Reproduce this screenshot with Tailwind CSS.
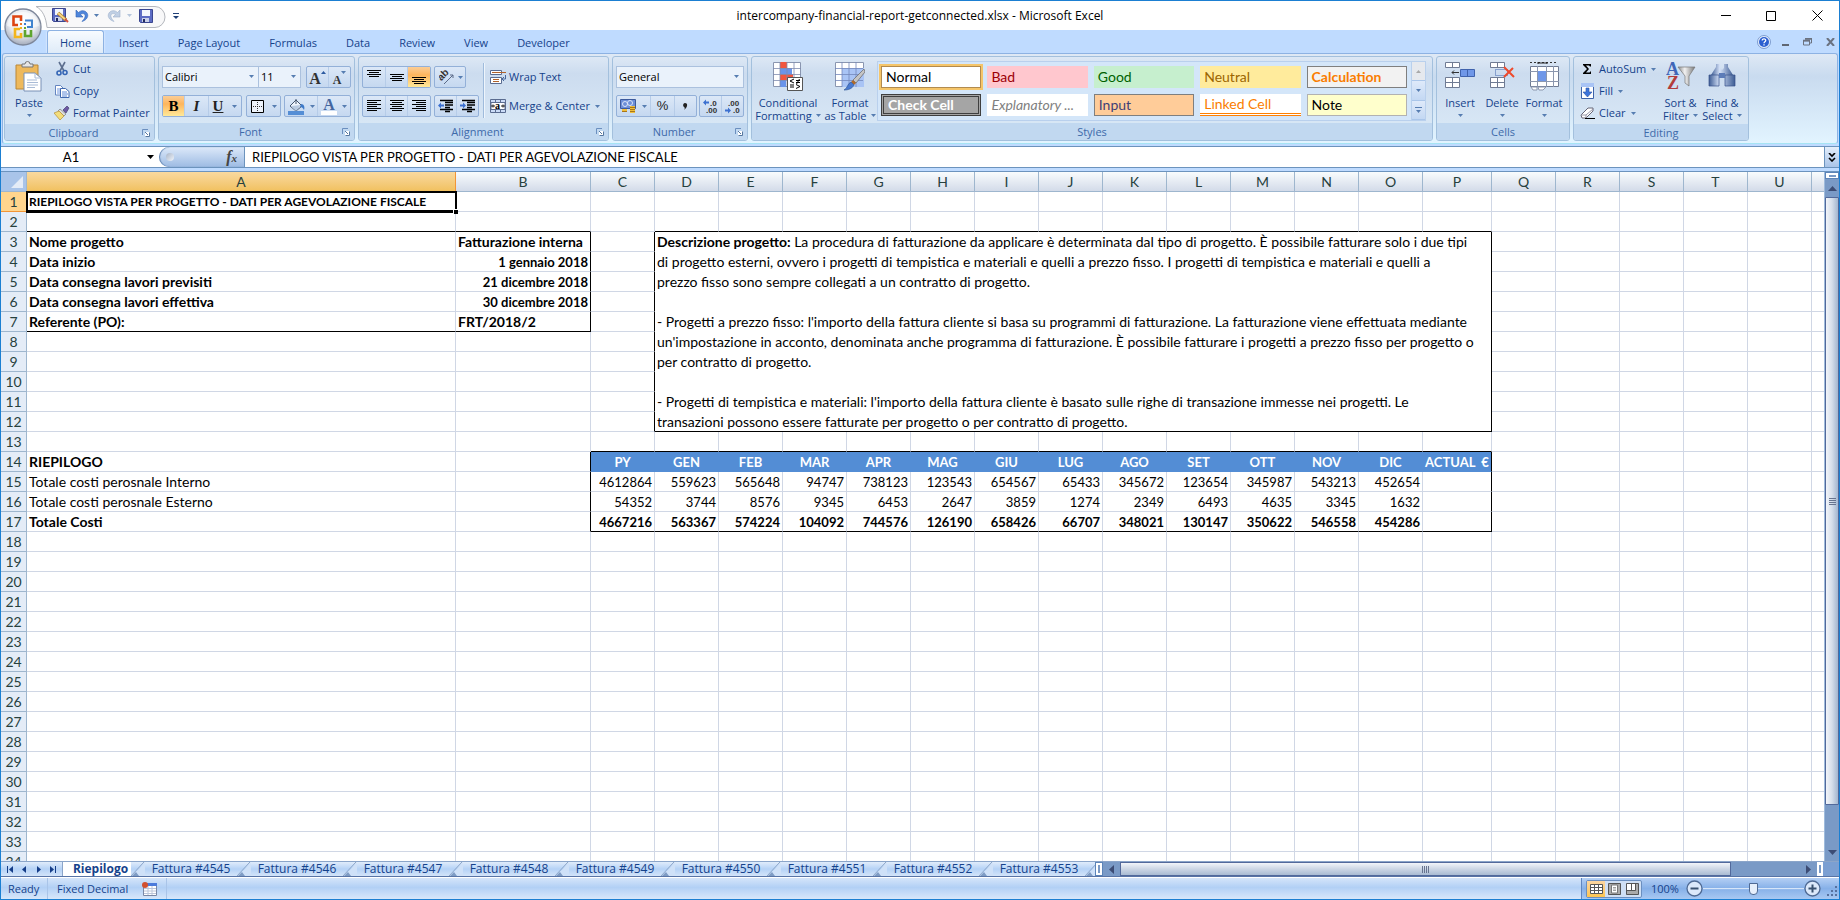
<!DOCTYPE html>
<html lang="it">
<head>
    <meta charset="UTF-8">
    <meta name="viewport" content="width=device-width, initial-scale=1.0">
    <title>intercompany-financial-report-getconnected.xlsx - Microsoft Excel</title>
    <script src="https://cdn.jsdelivr.net/npm/@tailwindcss/browser@4"></script>
</head>
<body class="h-screen overflow-hidden flex flex-col border border-[#1b7fd2] bg-[#bfdbff] font-['Open_Sans',sans-serif] text-[11px] leading-[16px] text-[#15428b]">

    <!-- Shared icon shapes -->
    <svg class="absolute size-0" aria-hidden="true">
        <defs>
            <linearGradient id="g-steel" x1="0" y1="0" x2="1" y2="0"><stop offset="0" stop-color="#3d5c94"/><stop offset=".4" stop-color="#d5e2f8"/><stop offset="1" stop-color="#3d5c94"/></linearGradient>
            <linearGradient id="g-grey" x1="0" y1="0" x2="1" y2="0"><stop offset="0" stop-color="#8a8a8a"/><stop offset=".4" stop-color="#f2f2f2"/><stop offset="1" stop-color="#777"/></linearGradient>
            <radialGradient id="g-orb" cx=".5" cy=".35" r=".65"><stop offset="0" stop-color="#fff"/><stop offset=".6" stop-color="#e6e9ef"/><stop offset="1" stop-color="#a3abbb"/></radialGradient>
            <symbol id="caret" viewBox="0 0 5 3"><path d="M0 0H5L2.500 3Z" fill="#567db1"/></symbol>
            <symbol id="launcher" viewBox="0 0 8 8"><path d="M.5 6V.5H6" fill="none" stroke="#6b8fbf"/><path d="M3 3h4.500v4.500H3z" fill="#fff"/><path d="M3 3L6 6M7.500 3.500v4h-4" fill="none" stroke="#55779f"/></symbol>
            <symbol id="floppy" viewBox="0 0 14 14"><path d="M.5.5h13v13H1.500l-1-1z" fill="#5d6cc4" stroke="#3a4690"/><path d="M3 1h8v6H3z" fill="#f3f6fd"/><path d="M3 9h7v4H3z" fill="#c9d0ea"/><path d="M4 10h2v3H4z" fill="#222b60"/></symbol>
        </defs>
    </svg>

    <!-- Title bar -->
    <header class="relative flex h-[29px] shrink-0 items-center bg-white text-black">
        <svg class="absolute left-[34px] top-[5px]" width="132" height="22" viewBox="0 0 132 22"><path d="M1 .5H120a10 10.500 0 0 1 0 21H12C11 12 8 4 1 .5Z" fill="#f8f8f9" stroke="#b4b7bd"/></svg>
        <div class="relative flex flex-1 items-center">
            <button class="ml-[51px]" aria-label="Save as"><svg width="17" height="15" viewBox="0 0 17 15"><use href="#floppy" width="14" height="14"/><path d="M6 5l8 7" stroke="#a7792a" stroke-width="3.500"/><path d="M6 5l8 7" stroke="#f7d683" stroke-width="2"/><path d="M13 11l3 3" stroke="#d05040" stroke-width="2"/></svg></button>
            <button class="ml-[6px]" aria-label="Undo"><svg width="14" height="14" viewBox="0 0 14 14"><path d="M1 1v7h7L5.500 5.500C8 3.500 11 5 10 8 9.500 10 8 11 7 12.500 12 11 14 7 12 4 10 1 6 1 3.500 3.500Z" fill="#4f86db" stroke="#2f62b5" stroke-width=".6"/></svg></button>
            <button class="ml-[5px]" aria-label="Undo list"><svg width="5" height="3"><use href="#caret"/></svg></button>
            <button class="ml-[8px]" aria-label="Redo"><svg width="14" height="14" viewBox="0 0 14 14"><path d="M13 1v7H6l2.500-2.500C6 3.500 3 5 4 8 4.500 10 6 11 7 12.500 2 11 0 7 2 4 4 1 8 1 10.500 3.500Z" fill="#c0cfe4" stroke="#9db0cb" stroke-width=".6"/></svg></button>
            <button class="ml-[6px] opacity-40" aria-label="Redo list"><svg width="5" height="3"><use href="#caret"/></svg></button>
            <button class="ml-[7px]" aria-label="Save"><svg width="14" height="14"><use href="#floppy"/></svg></button>
            <button class="ml-[20px]" aria-label="Customize Quick Access Toolbar"><svg width="6" height="6" viewBox="0 0 6 6"><path d="M0 .5h6" stroke="#1e3f76"/><path d="M0 3h6L3 6Z" fill="#1e3f76"/></svg></button>
        </div>
        <h1 class="text-[12px]">intercompany-financial-report-getconnected.xlsx - Microsoft Excel</h1>
        <div class="flex flex-1 items-center justify-end">
            <button aria-label="Minimize"><svg width="11" height="11" viewBox="0 0 11 11"><path d="M0 5.500h10" stroke="#000"/></svg></button>
            <button class="ml-[34px]" aria-label="Maximize"><svg width="10" height="10" viewBox="0 0 10 10"><path d="M.5.5h9v9h-9z" fill="none" stroke="#000"/></svg></button>
            <button class="ml-[36px] mr-[16px]" aria-label="Close"><svg width="11" height="11" viewBox="0 0 11 11"><path d="M.5.5l10 10M10.500.5l-10 10" stroke="#000"/></svg></button>
        </div>
        <button class="absolute left-[3px] top-[7px] z-10" aria-label="Office Button">
            <svg width="38" height="38" viewBox="0 0 38 38">
                <circle cx="19" cy="19" r="18" fill="url(#g-orb)" stroke="#7e879a" stroke-width="1.300"/>
                <path d="M3 18a16 14 0 0 1 32 0Q19 23 3 18Z" fill="#fff" opacity=".5"/>
                <g fill="none" stroke-width="2.600">
                    <path d="M17 13V8.500H9.500V17H14" stroke="#dd4412"/>
                    <path d="M21 12.500h7V19h-5" stroke="#4184cf" stroke-width="2"/>
                    <path d="M16 21h-5v8h6v-4" stroke="#f3b51c"/>
                    <path d="M27 22v6h-6v-6" stroke="#5fa52e"/>
                </g>
                <g fill="#e8792a"><path d="M16 15h2v2h-2z"/><path d="M20 15h2v2h-2z" fill="#3c7fd0"/><path d="M16 19h2v2h-2z" fill="#f3b51c"/><path d="M20 19h2v2h-2z" fill="#68ab30"/></g>
            </svg>
        </button>
    </header>

    <!-- Ribbon tabs -->
    <nav class="flex h-[23px] shrink-0 items-stretch gap-px pl-[46px]">
        <button class="rounded-t-[3px] border border-b-0 border-[#8db2e3] bg-linear-to-b from-[#f7fbff] to-[#dfebf8] px-[12px] pt-[2px] shadow-[0_0_2px_#fff]">Home</button>
        <button class="px-[14px] pt-[3px]">Insert</button>
        <button class="px-[14px] pt-[3px]">Page Layout</button>
        <button class="px-[14px] pt-[3px]">Formulas</button>
        <button class="px-[14px] pt-[3px]">Data</button>
        <button class="px-[14px] pt-[3px]">Review</button>
        <button class="px-[14px] pt-[3px]">View</button>
        <button class="px-[14px] pt-[3px]">Developer</button>
        <div class="ml-auto flex items-center pr-[4px]">
            <button aria-label="Help"><svg width="14" height="14" viewBox="0 0 14 14"><circle cx="7" cy="7" r="6.500" fill="#e4eefc" stroke="#7d9cd0"/><circle cx="7" cy="7" r="5" fill="#2c5fd0"/><path d="M5.200 5.500C5.200 3.200 9 3.500 8.700 5.600 8.500 6.700 7 6.800 7 8.200M7 9.200v1.300" fill="none" stroke="#fff" stroke-width="1.300"/></svg></button>
            <button class="ml-[11px]" aria-label="Minimize workbook"><svg width="7" height="10" viewBox="0 0 7 10"><path d="M0 8h7" stroke="#5f6672" stroke-width="2"/></svg></button>
            <button class="ml-[14px]" aria-label="Restore workbook"><svg width="9" height="8" viewBox="0 0 9 8"><path d="M2 1h6.500v4H7M.5 3h6v4h-6z" fill="none" stroke="#6b7280"/><path d="M0 2.500h7M2 .8h7" stroke="#6b7280" stroke-width="1.500"/></svg></button>
            <button class="ml-[14px]" aria-label="Close workbook"><svg width="9" height="8" viewBox="0 0 9 8"><path d="M1 0l7 8M8 0L1 8" stroke="#6b7280" stroke-width="2"/></svg></button>
        </div>
    </nav>

    <!-- Ribbon -->
    <section class="mx-px flex h-[91px] shrink-0 gap-[3px] rounded-[3px] border border-[#8db2e3] border-b-[#a5e4f4] bg-linear-to-b from-[#dfe9f5] via-[#c9dbef] via-25% to-[#e2f4ff] px-px py-[2px] *:flex *:flex-col *:shrink-0 *:overflow-hidden *:rounded-[3px] *:border *:border-[#a3c0dd] *:bg-linear-to-b *:from-[#dde8f5] *:via-[#ccdcef] *:via-20% *:to-[#dbeaf7]">

        <div class="w-[151px]">
            <div class="flex h-[69px]">
                <button class="flex w-[48px] flex-col items-center pt-[4px]">
                    <svg width="28" height="32" viewBox="0 0 28 32">
                        <path d="M1 4h22v24H1z" fill="#eeb95c" stroke="#b98738"/><path d="M7 5V3h3a2 2 0 0 1 5 0h3v3H7z" fill="#e6e6e6" stroke="#777"/>
                        <path d="M9 12h11l6 5v13H9z" fill="#fff" stroke="#7890b5"/><path d="M20 12v5h6M12 19h10M12 21.500h11M12 24h11M12 26.500h8" fill="none" stroke="#a9bbd6"/>
                    </svg>
                    <span class="mt-[2px]">Paste</span>
                    <svg class="mt-[3px]" width="5" height="3"><use href="#caret"/></svg>
                </button>
                <div class="flex flex-col items-start pl-[1px] pt-px">
                    <button class="flex h-[22px] items-center gap-[3px]">
                        <svg width="16" height="16" viewBox="0 0 16 16"><path d="M5 1l5 9M11 1L6 10" stroke="#5d6f8f" stroke-width="1.600"/><circle cx="5" cy="12" r="2" fill="none" stroke="#3465b5" stroke-width="1.600"/><circle cx="11" cy="11.500" r="2" fill="none" stroke="#3465b5" stroke-width="1.600"/></svg>Cut
                    </button>
                    <button class="flex h-[22px] items-center gap-[3px]">
                        <svg width="16" height="16" viewBox="0 0 16 16"><path d="M1.500 2.500h5l2.500 2.500v7h-7.500z" fill="#fff" stroke="#6485c0"/><path d="M3 6h4M3 8h4M3 10h4" stroke="#6e96df"/><path d="M6.500 5.500h5l3.500 3v6h-8.500z" fill="#fff" stroke="#4069b0"/><path d="M8 9h5M8 11h6M8 13h5" stroke="#5c88d8"/></svg>Copy
                    </button>
                    <button class="flex h-[22px] items-center gap-[3px] whitespace-nowrap">
                        <svg width="16" height="16" viewBox="0 0 16 16"><path d="M9 5l4-4 2 2-3 5z" fill="#6d5aa5" stroke="#4b4170" stroke-width=".7"/><path d="M6 4l6 5-2 2-6-5z" fill="#ddd" stroke="#777" stroke-width=".7"/><path d="M5 6l5 5-4 4-6-7z" fill="#f3dd7b" stroke="#b58e35" stroke-width=".7"/></svg>Format Painter
                    </button>
                </div>
            </div>
            <div class="flex flex-1 items-center bg-[#c1d8f0] pr-[4px] text-[#3e6aaa]"><h2 class="flex-1 pt-px text-center">Clipboard</h2><button aria-label="Clipboard pane"><svg width="8" height="8"><use href="#launcher"/></svg></button></div>
        </div>

        <div class="w-[197px]">
            <div class="flex h-[69px] flex-col gap-[7px] px-[3px] pt-[9px]">
                <div class="flex h-[22px]">
                    <div class="relative w-[97px]">
                        <select aria-label="Font" class="size-full appearance-none border border-[#abc1de] bg-[#eaf2fb] pl-[2px] text-black"><option>Calibri</option></select>
                        <svg class="pointer-events-none absolute right-[5px] top-[9px]" width="5" height="3"><use href="#caret"/></svg>
                    </div>
                    <div class="relative -ml-px w-[43px]">
                        <select aria-label="Font size" class="size-full appearance-none border border-[#abc1de] bg-[#eaf2fb] pl-[2px] text-black"><option>11</option></select>
                        <svg class="pointer-events-none absolute right-[5px] top-[9px]" width="5" height="3"><use href="#caret"/></svg>
                    </div>
                    <div class="ml-auto flex w-[45px] divide-x divide-[#b6cce8] rounded-[2px] border border-[#93b0d8] bg-linear-to-b from-[#dce8f7] to-[#c5d8f0] font-['Liberation_Serif',serif] font-bold text-[#333] *:flex *:flex-1 *:items-center *:justify-center">
                        <button aria-label="Increase font size"><span class="pt-[3px] text-[16px]">A</span><svg class="mb-[10px]" width="5" height="3" viewBox="0 0 5 3"><path d="M0 3h5L2.500 0z" fill="#2c5aa0"/></svg></button>
                        <button aria-label="Decrease font size"><span class="pt-[5px] text-[12px]">A</span><svg class="mb-[10px]" width="5" height="3"><use href="#caret"/></svg></button>
                    </div>
                </div>
                <div class="flex h-[22px] justify-between *:flex *:items-stretch *:rounded-[2px] *:border *:border-[#93b0d8] *:bg-linear-to-b *:from-[#dce8f7] *:to-[#c5d8f0]">
                    <div class="divide-x divide-[#b6cce8] font-['Liberation_Serif',serif] text-[15px] text-[#222]">
                        <button class="w-[22px] bg-linear-to-b from-[#fbcd95] via-[#fdb55c] via-40% to-[#ffe998] font-bold text-black">B</button>
                        <button class="w-[24px] font-bold italic">I</button>
                        <button class="flex w-[32px] items-center justify-center gap-[9px] font-bold"><span class="underline">U</span><svg width="5" height="3"><use href="#caret"/></svg></button>
                    </div>
                    <div>
                        <button class="flex w-[33px] items-center gap-[8px] pl-[4px]" aria-label="Borders"><svg width="13" height="13" viewBox="0 0 13 13"><path d="M.5.5h12v12H.5z" fill="#eef3fb" stroke="#000"/><path d="M6.500 2v9M2 6.500h9" stroke="#333" stroke-dasharray="1 1"/></svg><svg width="5" height="3"><use href="#caret"/></svg></button>
                    </div>
                    <div class="divide-x divide-[#b6cce8]">
                        <button class="flex w-[33px] items-center gap-[5px] pl-[3px]" aria-label="Fill color"><svg width="17" height="17" viewBox="0 0 17 17"><path d="M8 1v5M8 2l6 6-6 5-6-5z" fill="#eef4fc" stroke="#44566f"/><path d="M3 8l10-1-5 6z" fill="#b9cbe2"/><path d="M13 6c3 0 4 3 3 6-1-2-2-3-4-3z" fill="#3c79c8"/><path d="M0 13h16v4H0z" fill="#558ed5"/></svg><svg width="5" height="3"><use href="#caret"/></svg></button>
                        <button class="flex w-[32px] items-center gap-[5px] pl-[3px]" aria-label="Font color"><span class="flex w-[16px] flex-col items-center font-['Liberation_Serif',serif] text-[16px] font-bold leading-[13px] text-[#44669f]">A<span class="h-[4px] w-full bg-white"></span></span><svg width="5" height="3"><use href="#caret"/></svg></button>
                    </div>
                </div>
            </div>
            <div class="flex flex-1 items-center bg-[#c1d8f0] pr-[4px] text-[#3e6aaa]"><h2 class="flex-1 pt-px text-center">Font</h2><button aria-label="Font settings"><svg width="8" height="8"><use href="#launcher"/></svg></button></div>
        </div>

        <div class="w-[251px]">
            <div class="flex h-[69px] px-[3px] pt-[9px]">
                <div class="flex w-[117px] flex-col gap-[7px]">
                    <div class="flex h-[22px] gap-[3px] *:flex *:rounded-[2px] *:border *:border-[#93b0d8] *:bg-linear-to-b *:from-[#dce8f7] *:to-[#c5d8f0]">
                        <div class="w-[69px] divide-x divide-[#b6cce8] *:flex *:flex-1 *:items-center *:justify-center">
                            <button aria-label="Top align"><svg width="14" height="14" viewBox="0 0 14 14"><path d="M0 .5h14M2 2.500h10M0 4.500h14M2 6.500h10" stroke="#000"/></svg></button>
                            <button aria-label="Middle align"><svg width="14" height="14" viewBox="0 0 14 14"><path d="M0 4.500h14M2 6.500h10M0 8.500h14M2 10.500h10" stroke="#000"/></svg></button>
                            <button aria-label="Bottom align" class="bg-linear-to-b from-[#fbcd95] via-[#fdb55c] via-40% to-[#ffe998]"><svg width="14" height="14" viewBox="0 0 14 14"><path d="M0 7.500h14M2 9.500h10M0 11.500h14M2 13.500h10" stroke="#000"/></svg></button>
                        </div>
                        <div class="w-[32px]"><button class="flex items-center gap-[3px] pl-[4px]" aria-label="Orientation"><svg width="16" height="16" viewBox="0 0 16 16"><text x="0" y="9" transform="rotate(-45 5 8)" font-family="Liberation Sans" font-weight="bold" font-size="10" fill="#333">ab</text><path d="M5 15l9-9M14 6h-3M14 6v3" fill="none" stroke="#5a6b88"/></svg><svg width="5" height="3"><use href="#caret"/></svg></button></div>
                    </div>
                    <div class="flex h-[22px] gap-[3px] *:flex *:divide-x *:divide-[#b6cce8] *:rounded-[2px] *:border *:border-[#93b0d8] *:bg-linear-to-b *:from-[#dce8f7] *:to-[#c5d8f0]">
                        <div class="w-[69px] *:flex *:flex-1 *:items-center *:justify-center">
                            <button aria-label="Align left"><svg width="14" height="12" viewBox="0 0 14 12"><path d="M0 .5h14M0 2.500h10M0 4.500h14M0 6.500h10M0 8.500h14M0 10.500h10" stroke="#000"/></svg></button>
                            <button aria-label="Center"><svg width="14" height="12" viewBox="0 0 14 12"><path d="M0 .5h14M2 2.500h10M0 4.500h14M2 6.500h10M0 8.500h14M2 10.500h10" stroke="#000"/></svg></button>
                            <button aria-label="Align right"><svg width="14" height="12" viewBox="0 0 14 12"><path d="M0 .5h14M4 2.500h10M0 4.500h14M4 6.500h10M0 8.500h14M4 10.500h10" stroke="#000"/></svg></button>
                        </div>
                        <div class="w-[45px] *:flex *:flex-1 *:items-center *:justify-center">
                            <button aria-label="Decrease indent"><svg width="16" height="14" viewBox="0 0 16 14"><path d="M2 1.500h13M7 3.500h8M7 6h8M7 8.500h5M2 10.500h13M7 12.500h5" stroke="#000" stroke-width="1.300"/><path d="M0 6.500l3-3v2h3v2H3v2z" fill="#3c70d0"/></svg></button>
                            <button aria-label="Increase indent"><svg width="16" height="14" viewBox="0 0 16 14"><path d="M2 1.500h13M7 3.500h8M7 6h8M7 8.500h5M2 10.500h13M7 12.500h5" stroke="#000" stroke-width="1.300"/><path d="M6 6.500l-3-3v2H0v2h3v2z" fill="#3c70d0"/></svg></button>
                        </div>
                    </div>
                </div>
                <div class="-mt-[3px] ml-[4px] h-[55px] border-l border-[#9fbbdc] shadow-[1px_0_0_#eef5fc]"></div>
                <div class="flex flex-col gap-[7px] pl-[6px]">
                    <button class="flex h-[22px] items-center gap-[3px]"><svg width="16" height="16" viewBox="0 0 16 16"><path d="M.5 1.500h11v4H.5zM.5 8.500h11v6H.5z" fill="#fff" stroke="#5a6c90"/><path d="M2 3.500h14M3 10.500h6M3 12.500h6" stroke="#b0622b"/><path d="M15.500 6v4h-3M14 8l-2 2 2 2" fill="none" stroke="#46679c"/></svg>Wrap Text</button>
                    <button class="flex h-[22px] items-center gap-[3px] whitespace-nowrap"><svg width="16" height="16" viewBox="0 0 16 16"><path d="M.5 1.500h15v13H.5z" fill="#cbdcf7" stroke="#5a6c90"/><path d="M5.500 1v3M10.500 1v3M5.500 12v3M10.500 12v3" stroke="#5a6c90"/><path d="M1 4.500h14v7H1z" fill="#fff" stroke="#5a6c90"/><path d="M1 8h4M11 8h4M3 6.500v3M13 6.500v3" stroke="#222"/><text x="5" y="11" font-family="Liberation Serif" font-weight="bold" font-size="10" fill="#000">a</text></svg>Merge &amp; Center<svg class="ml-[2px]" width="5" height="3"><use href="#caret"/></svg></button>
                </div>
            </div>
            <div class="flex flex-1 items-center bg-[#c1d8f0] pr-[4px] text-[#3e6aaa]"><h2 class="flex-1 pt-px text-center">Alignment</h2><button aria-label="Alignment settings"><svg width="8" height="8"><use href="#launcher"/></svg></button></div>
        </div>

        <div class="w-[136px]">
            <div class="flex h-[69px] flex-col gap-[7px] px-[3px] pt-[9px]">
                <div class="relative h-[22px]">
                    <select aria-label="Number format" class="size-full appearance-none border border-[#abc1de] bg-[#eaf2fb] pl-[2px] text-black"><option>General</option></select>
                    <svg class="pointer-events-none absolute right-[5px] top-[9px]" width="5" height="3"><use href="#caret"/></svg>
                </div>
                <div class="flex h-[22px] justify-between *:flex *:divide-x *:divide-[#b6cce8] *:rounded-[2px] *:border *:border-[#93b0d8] *:bg-linear-to-b *:from-[#dce8f7] *:to-[#c5d8f0]">
                    <div>
                        <button class="flex w-[34px] items-center gap-[5px] pl-[3px]" aria-label="Accounting format"><svg width="17" height="16" viewBox="0 0 17 16"><path d="M.5 1.500h15v9H.5z" fill="#6c8fd8" stroke="#3c5a9c"/><circle cx="5" cy="6" r="2.500" fill="none" stroke="#d8e4fa"/><circle cx="10" cy="5" r="2.500" fill="none" stroke="#d8e4fa"/><path d="M10 8h5v7h-5z" fill="#f0bf3b"/><path d="M10 9.500h5M10 11.500h5M10 13.500h5M2 13.500h5" stroke="#a8761a"/><path d="M2 11h5v2H2z" fill="#f0bf3b"/></svg><svg width="5" height="3"><use href="#caret"/></svg></button>
                        <button class="w-[24px] font-['Liberation_Sans',sans-serif] text-[13px] text-[#222]">%</button>
                        <button class="flex w-[21px] items-center justify-center" aria-label="Comma style"><svg width="5" height="7" viewBox="0 0 5 7"><path d="M2 0c3 0 3 4-1 7 1-2 1-2 0-3C-.5 3 0 0 2 0z" fill="#222"/></svg></button>
                    </div>
                    <div class="w-[45px] *:flex *:flex-1 *:items-center *:justify-center">
                        <button aria-label="Increase decimal"><svg width="16" height="15" viewBox="0 0 16 15" font-family="Liberation Sans" font-weight="bold" font-size="8" fill="#333"><path d="M0 3.500l3-3v2h3v2H3v2z" fill="#3c70d0"/><text x="7" y="6.500">.0</text><text x="3" y="14">.00</text></svg></button>
                        <button aria-label="Decrease decimal"><svg width="16" height="15" viewBox="0 0 16 15" font-family="Liberation Sans" font-weight="bold" font-size="8" fill="#333"><path d="M6 11.500l-3-3v2H0v2h3v2z" fill="#3c70d0"/><text x="3" y="6.500">.00</text><text x="8" y="14">.0</text></svg></button>
                    </div>
                </div>
            </div>
            <div class="flex flex-1 items-center bg-[#c1d8f0] pr-[4px] text-[#3e6aaa]"><h2 class="flex-1 pt-px text-center">Number</h2><button aria-label="Number settings"><svg width="8" height="8"><use href="#launcher"/></svg></button></div>
        </div>

        <div class="w-[682px]">
            <div class="flex h-[69px] pl-px">
                <button class="flex w-[70px] flex-col items-center pt-[5px] leading-[13px]">
                    <svg width="30" height="29" viewBox="0 0 30 29">
                        <path d="M.5.500h27v24H.5z" fill="#fff" stroke="#8a96b0"/><path d="M7 0h7v6H7zM7 12h13v6H7z" fill="#f0563f"/><path d="M7 6h12v6H7zM7 18h6v7H7z" fill="#6a94ea"/>
                        <path d="M7 0v25M14 0v25M21 0v25M0 6.500h28M0 12.500h28M0 18.500h28" stroke="#7f8cae" stroke-width=".8"/>
                        <path d="M14.500 15.500h15v13h-15z" fill="#fff" stroke="#555"/><path d="M21 17l-4 2 4 2M17 23h4M17 25h4M23 18.500h4M23 20.500h4M26.500 17l-3 5M23 22.500l4 2-4 2" fill="none" stroke="#000"/>
                    </svg>
                    <span class="mt-[5px]">Conditional</span>
                    <span class="flex items-center gap-[4px]">Formatting<svg width="5" height="3"><use href="#caret"/></svg></span>
                </button>
                <button class="flex w-[54px] flex-col items-center whitespace-nowrap pt-[5px] leading-[13px]">
                    <svg width="30" height="29" viewBox="0 0 30 29">
                        <path d="M.5.500h28v24H.5z" fill="#fff" stroke="#8a96b0"/><path d="M7 6h22v19H7z" fill="#a9c4f5"/><path d="M7 0v25M14 0v25M21 0v25M0 6.500h28M0 12.500h28M0 18.500h28" stroke="#7488bb" stroke-width=".8"/>
                        <path d="M29 7L18 18l3 3L30 10z" fill="#c5c5c5" stroke="#666" stroke-width=".7"/><path d="M18 18l3 3-2 2-3-3z" fill="#b06a2a"/><path d="M16 20l3 3c-2 4-6 5-10 5 4-2 3-6 7-8z" fill="#4a7ad0" stroke="#355c9c" stroke-width=".7"/>
                    </svg>
                    <span class="mt-[5px]">Format</span>
                    <span class="flex items-center gap-[4px]">as Table<svg width="5" height="3"><use href="#caret"/></svg></span>
                </button>
                <!-- Style gallery -->
                <div class="mt-[4px] flex h-[60px] border border-[#b9d0ed] bg-[#d4e6f9] font-[Lato,sans-serif] text-[14px]">
                    <div class="grid w-[532px] grid-cols-5 gap-x-[6px] gap-y-[6px] px-[3px] py-[4px] *:h-[22px] *:whitespace-nowrap *:px-[4px] *:text-left">
                        <button class="border border-[#b28b4f] bg-white text-black shadow-[0_0_0_2px_#f5c56a]">Normal</button>
                        <button class="bg-[#ffc7ce] text-[#9c0006]">Bad</button>
                        <button class="bg-[#c6efce] text-[#006100]">Good</button>
                        <button class="bg-[#ffeb9c] text-[#9c6500]">Neutral</button>
                        <button class="border border-[#7f7f7f] bg-[#f2f2f2] font-bold leading-[20px] text-[#fa7d00]">Calculation</button>
                        <button class="border-[3px] border-double border-[#3f3f3f] bg-[#a5a5a5] font-bold text-white">Check Cell</button>
                        <button class="bg-white italic text-[#7f7f7f]">Explanatory ...</button>
                        <button class="border border-[#7f7f7f] bg-[#ffcc99] leading-[20px] text-[#3f3f76]">Input</button>
                        <button class="border-b-[3px] border-double border-[#ff8001] bg-white text-[#fa7d00]">Linked Cell</button>
                        <button class="border border-[#b2b2b2] bg-[#ffffcc] leading-[20px] text-black">Note</button>
                    </div>
                    <div class="ml-px flex w-[14px] flex-col border-l border-[#b9d0ed] *:flex *:flex-1 *:items-center *:justify-center *:border-b *:border-[#aac6ea]">
                        <button aria-label="Previous styles" class="bg-[#e6e9ee]"><svg width="5" height="3" viewBox="0 0 5 3"><path d="M0 3h5L2.500 0z" fill="#a9a9a9"/></svg></button>
                        <button aria-label="Next styles" class="bg-linear-to-b from-[#dfeafa] to-[#c3d8f3]"><svg width="5" height="3"><use href="#caret"/></svg></button>
                        <button aria-label="More styles" class="bg-linear-to-b from-[#dfeafa] to-[#c3d8f3]"><svg width="7" height="6" viewBox="0 0 7 6"><path d="M0 .5h7" stroke="#567db1"/><path d="M1 3h5L3.500 6z" fill="#567db1"/></svg></button>
                    </div>
                </div>
            </div>
            <h2 class="flex flex-1 items-center justify-center bg-[#c1d8f0] pt-px text-[#3e6aaa]">Styles</h2>
        </div>

        <div class="w-[134px]">
            <div class="flex h-[69px] pl-[2px] *:flex *:w-[42px] *:flex-col *:items-center *:pt-[5px]">
                <button>
                    <svg width="31" height="29" viewBox="0 0 31 29"><path d="M.5.500h14v5H.5zM.5 15.500h14v10H.5z" fill="#fff" stroke="#6f7b93"/><path d="M7.500 0v6M7.500 15v11M0 20.500h15" stroke="#6f7b93"/><path d="M15.500 7.500h14v7h-14z" fill="#6f97e8" stroke="#3f62ad"/><path d="M22.500 7v8" stroke="#3f62ad"/><path d="M14 10.500H7M9 8.500l-2 2 2 2" fill="none" stroke="#333"/></svg>
                    <span class="mt-[4px]">Insert</span><svg class="mt-[3px]" width="5" height="3"><use href="#caret"/></svg>
                </button>
                <button>
                    <svg width="25" height="29" viewBox="0 0 25 29"><path d="M.5.500h14v5H.5zM.5 15.500h14v10H.5z" fill="#fff" stroke="#6f7b93"/><path d="M7.500 0v6M7.500 15v11M0 20.500h15" stroke="#6f7b93"/><path d="M5.500 7.500h12v6h-12z" fill="none" stroke="#3f62ad" stroke-dasharray="1 1"/><path d="M14 5l10 10M23 6L14 15" stroke="#ee4a2c" stroke-width="2"/></svg>
                    <span class="mt-[4px]">Delete</span><svg class="mt-[3px]" width="5" height="3"><use href="#caret"/></svg>
                </button>
                <button>
                    <svg width="31" height="29" viewBox="0 0 31 29"><path d="M1.500 4.500h28v20h-28z" fill="#fff" stroke="#6f7b93"/><path d="M8.500 4v21M17.500 4v21M24.500 4v21M1 9.500h29M1 19.500h29" stroke="#8c97ae"/><path d="M9 9h8v10H9z" fill="#6f97e8"/><path d="M1 .5h26" stroke="#333" stroke-dasharray="2 2"/><path d="M9 0v2M18 0v2M9 1h9" stroke="#222"/><path d="M2 25h6v3H4zM9 25h8l-3 3h-4z" fill="#fff" stroke="#8c97ae"/></svg>
                    <span class="mt-[4px]">Format</span><svg class="mt-[3px]" width="5" height="3"><use href="#caret"/></svg>
                </button>
            </div>
            <h2 class="flex flex-1 items-center justify-center bg-[#c1d8f0] pt-px text-[#3e6aaa]">Cells</h2>
        </div>

        <div class="w-[176px]">
            <div class="flex h-[69px]">
                <div class="flex w-[86px] flex-col items-start pl-[6px] pt-px">
                    <button class="flex h-[22px] items-center gap-[4px]"><svg width="15" height="12" viewBox="0 0 15 12"><path d="M3 1h8v2.500h-1L9 2.500H6L9 6 6 9.500h3.500L11 8v3H3v-1l4-4-4-4z" fill="#000"/></svg>AutoSum<svg class="ml-px" width="5" height="3"><use href="#caret"/></svg></button>
                    <button class="flex h-[22px] items-center gap-[4px]"><svg width="15" height="16" viewBox="0 0 15 16"><path d="M1.500.5h12v15h-12z" fill="#fff" stroke="#3e63a9"/><path d="M1 0h13v4H1z" fill="#a9c4f5"/><path d="M6 5h3v4h3l-4.500 5L3 9h3z" fill="#3d74da" stroke="#2b54a5" stroke-width=".6"/></svg>Fill<svg class="ml-px" width="5" height="3"><use href="#caret"/></svg></button>
                    <button class="flex h-[22px] items-center gap-[4px]"><svg width="15" height="14" viewBox="0 0 15 14"><path d="M1 9l7-7h5v3l-7 7H2z" fill="#fff" stroke="#667"/><path d="M1 9h5l7-6M6 9v3" fill="none" stroke="#99a"/><path d="M5 12.500h10" stroke="#000"/></svg>Clear<svg class="ml-px" width="5" height="3"><use href="#caret"/></svg></button>
                </div>
                <button class="flex w-[41px] flex-col items-center whitespace-nowrap pt-[4px] leading-[13px]">
                    <svg width="30" height="30" viewBox="0 0 30 30" font-family="Liberation Serif" font-weight="bold" font-size="18"><text x="0" y="14" fill="#3f66b8">A</text><text x="1" y="28" fill="#b23c3c">Z</text><path d="M12 6h17l-6 9v10l-4-3v-7z" fill="url(#g-grey)" stroke="#777" stroke-width=".7"/></svg>
                    <span class="mt-[5px]">Sort &amp;</span>
                    <span class="flex items-center gap-[4px]">Filter<svg width="5" height="3"><use href="#caret"/></svg></span>
                </button>
                <button class="flex w-[42px] flex-col items-center whitespace-nowrap pt-[4px] leading-[13px]">
                    <svg width="28" height="30" viewBox="0 0 28 30"><path d="M8 3h4v4l2 2 2-2V3h4v3l5 8v3h-8v-3h-6v3H3v-3l5-8z" fill="url(#g-steel)"/><path d="M1 14h10v11H1zM17 14h10v11H17z" fill="url(#g-steel)" stroke="#36528a" stroke-width=".7"/><path d="M11 12h6v5h-6z" fill="#5c7cb8"/></svg>
                    <span class="mt-[5px]">Find &amp;</span>
                    <span class="flex items-center gap-[4px]">Select<svg width="5" height="3"><use href="#caret"/></svg></span>
                </button>
            </div>
            <h2 class="flex flex-1 items-center justify-center bg-[#c1d8f0] pt-px text-[#3e6aaa]">Editing</h2>
        </div>
    </section>

    <!-- Formula bar -->
    <section class="mt-[2px] flex h-[22px] shrink-0 border-y border-[#6c93bd] bg-white font-[Lato,sans-serif] text-[13px] text-black">
        <input aria-label="Name box" value="A1" class="w-[140px] text-center outline-none">
        <button class="flex w-[18px] items-center justify-center" aria-label="Names"><svg width="7" height="4" viewBox="0 0 7 4"><path d="M0 0h7L3.500 4z" fill="#000"/></svg></button>
        <div class="flex w-[86px] items-center rounded-l-full border-r border-[#6c93bd] bg-linear-to-b from-[#dde9f9] to-[#9dbbe3] pl-[7px] pr-[7px] shadow-[inset_1px_0_1px_#5f82b0]">
            <span class="size-[8px] rounded-full bg-linear-to-br from-[#a8b4c6] to-[#f2f6fc]"></span>
            <button class="ml-auto font-['Liberation_Serif',serif] text-[16px] font-bold italic text-[#444]" aria-label="Insert function">f<span class="text-[11px]">x</span></button>
        </div>
        <input aria-label="Formula" value="RIEPILOGO VISTA PER PROGETTO - DATI PER AGEVOLAZIONE FISCALE" class="min-w-0 flex-1 pl-[7px] outline-none">
        <button class="flex w-[15px] items-center justify-center border-l border-[#6c93bd] bg-linear-to-b from-[#e4eefb] to-[#a9c4e8]" aria-label="Expand formula bar"><svg width="8" height="9" viewBox="0 0 8 9"><path d="M1 0l3 3 3-3M1 5l3 3 3-3" fill="none" stroke="#000" stroke-width="1.600"/></svg></button>
    </section>

    <!-- Worksheet -->
    <main class="mt-[3px] flex min-h-0 flex-1 border-t border-[#6c93bd] bg-white">
        <div class="min-w-0 flex-1 overflow-hidden">
            <table class="w-full table-fixed border-separate border-spacing-0 font-[Lato,sans-serif] text-[14px] leading-[19px] text-black">
                <colgroup id="cols"></colgroup>
                <thead><tr id="letters"></tr></thead>
                <tbody id="rows"></tbody>
            </table>
        </div>
        <!-- Vertical scroll bar -->
        <div class="flex w-[15px] flex-col items-center border-l border-[#9fbbdc] bg-[#7a9ac6]">
            <div class="flex h-[7px] w-full items-center justify-center border border-[#5c84b8] bg-white"><div class="h-[2px] w-[7px] bg-[#7a9ac6]"></div></div>
            <button class="flex h-[18px] items-center" aria-label="Scroll up"><svg width="9" height="5" viewBox="0 0 9 5"><path d="M0 5h9L4.500 0z" fill="#3c4c74"/></svg></button>
            <div class="min-h-0 w-full flex-1">
                <div class="flex h-[94%] flex-col items-center justify-center gap-px rounded-[1px] border border-[#52699b] bg-linear-to-r from-[#f2f5fa] via-[#d5deea] to-[#a3b6cf] *:h-px *:w-[7px] *:bg-[#67748f]"><i></i><i></i><i></i><i></i></div>
            </div>
            <button class="flex h-[17px] items-center" aria-label="Scroll down"><svg width="9" height="5" viewBox="0 0 9 5"><path d="M0 0h9L4.500 5z" fill="#3c4c74"/></svg></button>
        </div>
    </main>

    <!-- Sheet tabs and horizontal scroll bar -->
    <footer class="shrink-0">
        <div class="flex h-[16px] border-t border-[#8ba5c9] border-b border-b-[#5874a6] bg-linear-to-b from-[#e0ecfb] via-[#b5d2f6] to-[#d3e4f9]">
            <div class="flex w-[62px] items-center justify-around border-r border-[#8ba5c9] px-[2px]">
                <button aria-label="First sheet"><svg width="7" height="7" viewBox="0 0 7 7"><path d="M.5 0v7" stroke="#153d88"/><path d="M6 0v7L2 3.500z" fill="#153d88"/></svg></button>
                <button aria-label="Previous sheet"><svg width="5" height="7" viewBox="0 0 5 7"><path d="M4 0v7L0 3.500z" fill="#153d88"/></svg></button>
                <button aria-label="Next sheet"><svg width="5" height="7" viewBox="0 0 5 7"><path d="M1 0v7l4-3.500z" fill="#153d88"/></svg></button>
                <button aria-label="Last sheet"><svg width="7" height="7" viewBox="0 0 7 7"><path d="M6.500 0v7" stroke="#153d88"/><path d="M1 0v7l4-3.500z" fill="#153d88"/></svg></button>
            </div>
            <div id="tabs" class="flex w-[1032px] shrink-0 items-stretch overflow-hidden text-[12px]"></div>
            <div class="flex w-[8px] items-center justify-center border border-[#5c84b8] bg-white"><div class="h-[8px] w-[2px] bg-[#7a9ac6]"></div></div>
            <div class="flex min-w-0 flex-1 bg-[#7a9ac6]">
                <button class="flex w-[17px] items-center justify-center" aria-label="Scroll left"><svg width="5" height="9" viewBox="0 0 5 9"><path d="M5 0v9L0 4.500z" fill="#3c4c74"/></svg></button>
                <div class="min-w-0 flex-1"><div class="flex h-full w-[90%] items-center justify-center gap-px border border-[#52699b] bg-linear-to-b from-[#f2f5fa] via-[#ccd6e5] to-[#a9bbd3] *:h-[7px] *:w-px *:bg-[#67748f]"><i></i><i></i><i></i><i></i></div></div>
                <button class="flex w-[18px] items-center justify-center" aria-label="Scroll right"><svg width="5" height="9" viewBox="0 0 5 9"><path d="M0 0v9l5-4.500z" fill="#3c4c74"/></svg></button>
                <div class="flex w-[6px] items-center justify-center bg-white"><div class="h-[8px] w-[2px] bg-[#7a9ac6]"></div></div>
                <div class="w-[16px] bg-[#7b9fd2]"></div>
            </div>
        </div>

        <!-- Status bar -->
        <div class="flex h-[22px] items-stretch border-t border-white bg-linear-to-b from-[#d5e5fa] via-[#b2d0f5] via-45% to-[#d8e7fa]">
            <span class="flex w-[46px] items-center pl-[7px]">Ready</span>
            <span class="flex items-center gap-[14px] border-x border-[#a9c4e8] px-[9px]">Fixed Decimal
                <svg width="15" height="14" viewBox="0 0 15 14"><path d="M1.500 1.500h13v12h-13z" fill="#fff" stroke="#7a88a5"/><path d="M4 1h11v3H4z" fill="#4c7bdb"/><path d="M2 6.500h12M2 9h12M2 11.500h12M6 4v9M10 4v9" stroke="#bcc6da"/><circle cx="3" cy="3" r="3" fill="#d2502f"/></svg>
            </span>
            <div class="ml-auto flex items-center border-l border-[#5f86c0] bg-linear-to-b from-[#b4cff4] via-[#86b0e8] via-50% to-[#a8c8f2] pl-[4px] pr-[1px]">
                <div class="flex h-[18px] rounded-[2px] border border-[#6b8fc0] bg-[#cfdff4] *:flex *:w-[18px] *:items-center *:justify-center">
                    <button aria-label="Normal view" class="bg-linear-to-b from-[#fbd5a0] to-[#fdc54e]"><svg width="13" height="10" viewBox="0 0 13 10"><path d="M.5.500h12v9H.5zM.5 3.500h12M.5 6.500h12M4.500 0v10M8.500 0v10" fill="#fff" stroke="#555"/></svg></button>
                    <button aria-label="Page layout view"><svg width="13" height="12" viewBox="0 0 13 12"><path d="M.5.500h12v11H.5z" fill="#aaa" stroke="#555"/><path d="M3.500 2h6v8h-6z" fill="#fff" stroke="#777"/><path d="M5 4.500h3M5 6h3M5 7.500h3" stroke="#777" stroke-width=".7"/></svg></button>
                    <button aria-label="Page break preview"><svg width="13" height="12" viewBox="0 0 13 12"><path d="M.5.500h12v11H.5z" fill="#aaa" stroke="#555"/><path d="M1 1h4v6H1zM6 1h3v6H6z" fill="#fff"/><path d="M5.500 1v6.500M9.500 1v6.500H1" fill="none" stroke="#555"/></svg></button>
                </div>
                <button class="ml-[9px] w-[35px] text-left">100%</button>
                <button aria-label="Zoom out"><svg width="17" height="17" viewBox="0 0 17 17"><circle cx="8.500" cy="8.500" r="7.500" fill="#dbe8fa" stroke="#4f6a94" stroke-width="1.300"/><path d="M4.500 8.500h8" stroke="#38506f" stroke-width="2"/></svg></button>
                <input type="range" aria-label="Zoom" min="0" max="100" value="50" class="h-[14px] w-[101px] appearance-none bg-linear-to-b from-transparent from-45% via-[#e4eefb] via-45% to-transparent to-55% [&::-webkit-slider-thumb]:h-[12px] [&::-webkit-slider-thumb]:w-[9px] [&::-webkit-slider-thumb]:appearance-none [&::-webkit-slider-thumb]:rounded-b-[4px] [&::-webkit-slider-thumb]:border [&::-webkit-slider-thumb]:border-[#4f6a94] [&::-webkit-slider-thumb]:bg-[#e6effb]">
                <button aria-label="Zoom in"><svg width="17" height="17" viewBox="0 0 17 17"><circle cx="8.500" cy="8.500" r="7.500" fill="#dbe8fa" stroke="#4f6a94" stroke-width="1.300"/><path d="M4.500 8.500h8M8.500 4.500v8" stroke="#38506f" stroke-width="2"/></svg></button>
                <svg class="ml-[6px] mt-[6px]" width="11" height="11" viewBox="0 0 11 11"><path d="M8 0h2v2H8zM4 4h2v2H4zM8 4h2v2H8zM0 8h2v2H0zM4 8h2v2H4zM8 8h2v2H8z" fill="#56719f"/></svg>
            </div>
        </div>
    </footer>

    <script>
        const letters = 'ABCDEFGHIJKLMNOPQRSTU'.split('');
        const widths = { A: 429, B: 135, P: 69 };

        // Cell values, keyed by row then column
        const cells = {
            1: { A: 'RIEPILOGO VISTA PER PROGETTO - DATI PER AGEVOLAZIONE FISCALE' },
            3: { A: 'Nome progetto', B: 'Fatturazione interna' },
            4: { A: 'Data inizio', B: '1 gennaio 2018' },
            5: { A: 'Data consegna lavori previsiti', B: '21 dicembre 2018' },
            6: { A: 'Data consegna lavori effettiva', B: '30 dicembre 2018' },
            7: { A: 'Referente (PO):', B: 'FRT/2018/2' },
            14: { A: 'RIEPILOGO' },
            15: { A: 'Totale costi perosnale Interno' },
            16: { A: 'Totale costi perosnale Esterno' },
            17: { A: 'Totale Costi' }
        };
        const months = {
            14: ['PY', 'GEN', 'FEB', 'MAR', 'APR', 'MAG', 'GIU', 'LUG', 'AGO', 'SET', 'OTT', 'NOV', 'DIC', 'ACTUAL&nbsp; €'],
            15: [4612864, 559623, 565648, 94747, 738123, 123543, 654567, 65433, 345672, 123654, 345987, 543213, 452654, ''],
            16: [54352, 3744, 8576, 9345, 6453, 2647, 3859, 1274, 2349, 6493, 4635, 3345, 1632, ''],
            17: [4667216, 563367, 574224, 104092, 744576, 126190, 658426, 66707, 348021, 130147, 350622, 546558, 454286, '']
        };
        for (const row in months) {
            months[row].forEach((value, i) => cells[row][letters[i + 2]] = value);
        }

        const description = `<b>Descrizione progetto:</b> La procedura di fatturazione da applicare è determinata dal tipo di progetto. È possibile fatturare solo i due tipi<br>
            di progetto esterni, ovvero i progetti di tempistica e materiali e quelli a prezzo fisso. I progetti di tempistica e materiali e quelli a<br>
            prezzo fisso sono sempre collegati a un contratto di progetto.<br><br>
            - Progetti a prezzo fisso: l'importo della fattura cliente si basa su programmi di fatturazione. La fatturazione viene effettuata mediante<br>
            un'impostazione in acconto, denominata anche programma di fatturazione. È possibile fatturare i progetti a prezzo fisso per progetto o<br>
            per contratto di progetto.<br><br>
            - Progetti di tempistica e materiali: l'importo della fattura cliente è basato sulle righe di transazione immesse nei progetti. Le<br>
            transazioni possono essere fatturate per progetto o per contratto di progetto.`;

        function cellClass(row, col) {
            const i = letters.indexOf(col);
            const inMonths = i >= 2 && i <= 15;
            const list = ['h-[20px] whitespace-nowrap border-b border-r'];

            // Right edge of the boxes
            const darkRight = (col === 'B' && ((row >= 3 && row <= 7) || (row >= 14 && row <= 17)))
                || (col === 'C' && row >= 3 && row <= 12)
                || (col === 'P' && row >= 14 && row <= 17);
            // Bottom edge, also the line above each box
            const darkBottom = (i <= 1 && (row === 2 || row === 7))
                || (i >= 3 && i <= 15 && row === 2)
                || (inMonths && (row === 13 || row === 17));

            if (row === 14 && inMonths) {
                list.push('px-0 pt-px pb-0 leading-[18px] border-b-[#538dd5] bg-[#538dd5] text-center text-[13px] font-bold text-white');
                list.push(darkRight ? 'border-r-black' : 'border-r-[#538dd5]');
                return list.join(' ');
            }
            list.push('px-[2px]');
            list.push(darkRight ? 'border-r-black' : 'border-r-[#d0d7e5]');
            list.push(darkBottom ? 'border-b-black' : 'border-b-[#d0d7e5]');
            list.push(inMonths || (col === 'B' && row >= 4 && row <= 6)
                ? 'pt-px pb-0 leading-[18px] text-right text-[13px]'
                : 'py-0');
            if (row <= 7 || row === 14 || row === 17) list.push('font-bold');
            return list.join(' ');
        }

        document.getElementById('cols').innerHTML = '<col style="width:26px">'
            + letters.map(l => `<col style="width:${widths[l] || 64}px">`).join('') + '<col>';

        document.getElementById('letters').innerHTML =
            '<th class="h-[20px] border-b border-r border-[#9eb6ce] bg-[#a9c4e9] p-0"><svg class="ml-auto mr-[3px]" width="12" height="12" viewBox="0 0 12 12"><path d="M12 0v12H0z" fill="#e4ecf7"/></svg></th>'
            + letters.map(l => l === 'A'
                ? '<th class="h-[20px] border-b border-r border-[#f29536] bg-linear-to-b from-[#f9d99f] to-[#f1c15f] p-0 font-normal text-[#27413e]">A</th>'
                : `<th class="h-[20px] border-b border-r border-[#9eb6ce] bg-linear-to-b from-[#f9fcfd] to-[#d3dbe9] p-0 font-normal text-[#27413e]">${l}</th>`
            ).join('')
            + '<th class="border-b border-[#9eb6ce] bg-linear-to-b from-[#f9fcfd] to-[#d3dbe9]"></th>';

        let html = '';
        for (let row = 1; row <= 40; row++) {
            html += row === 1
                ? '<tr><th class="h-[20px] border-b border-r border-[#f29536] bg-[#ffd58d] p-0 font-normal text-[#27413e]">1</th>'
                : `<tr><th class="h-[20px] border-b border-r border-[#9eb6ce] bg-[#e4ecf7] p-0 font-normal text-[#27413e]">${row}</th>`;
            for (const col of letters) {
                // D3:P12 is one merged cell
                if (row >= 3 && row <= 12 && col >= 'D' && col <= 'P') {
                    if (row === 3 && col === 'D') {
                        html += `<td colspan="13" rowspan="10" class="whitespace-nowrap border-b border-r border-black p-0 px-[2px] align-top leading-[20px]"><div class="h-[199px]">${description}</div></td>`;
                    }
                    continue;
                }
                const value = (cells[row] || {})[col] ?? '';
                html += row === 1 && col === 'A'
                    ? `<td class="relative h-[20px] whitespace-nowrap border-b border-r border-black px-[2px] py-0 text-[12px] font-bold">${value}<span class="absolute -inset-px -bottom-[2px] -right-[2px] border-2 border-b-[3px] border-black"></span><span class="absolute -bottom-[3px] -right-[3px] size-[5px] border border-r-0 border-b-0 border-white bg-black"></span></td>`
                    : `<td class="${cellClass(row, col)}">${value}</td>`;
            }
            html += '<td class="border-b border-[#d0d7e5]"></td></tr>';
        }
        document.getElementById('rows').innerHTML = html;

        // Slanted edge drawn after each sheet tab
        const slant = '<svg class="shrink-0" width="14" height="14" viewBox="0 0 14 14"><path d="M1 14L14 1v13z" fill="#cfe1f8"/><path d="M0 14L13 0" stroke="#8ba5c9" fill="none"/><path d="M1 14l4-4 3 4z" fill="#7f9cc4"/></svg>';
        let tabs = `<button class="w-[68px] shrink-0 bg-white pl-[7px] text-center font-bold leading-[14px]">Riepilogo</button>${slant}`;
        for (let n = 4545; n <= 4553; n++) {
            tabs += `<button class="w-[92px] shrink-0 whitespace-nowrap text-center leading-[14px]">Fattura #${n}</button>${slant}`;
        }
        document.getElementById('tabs').innerHTML = tabs;
    </script>
</body>
</html>
